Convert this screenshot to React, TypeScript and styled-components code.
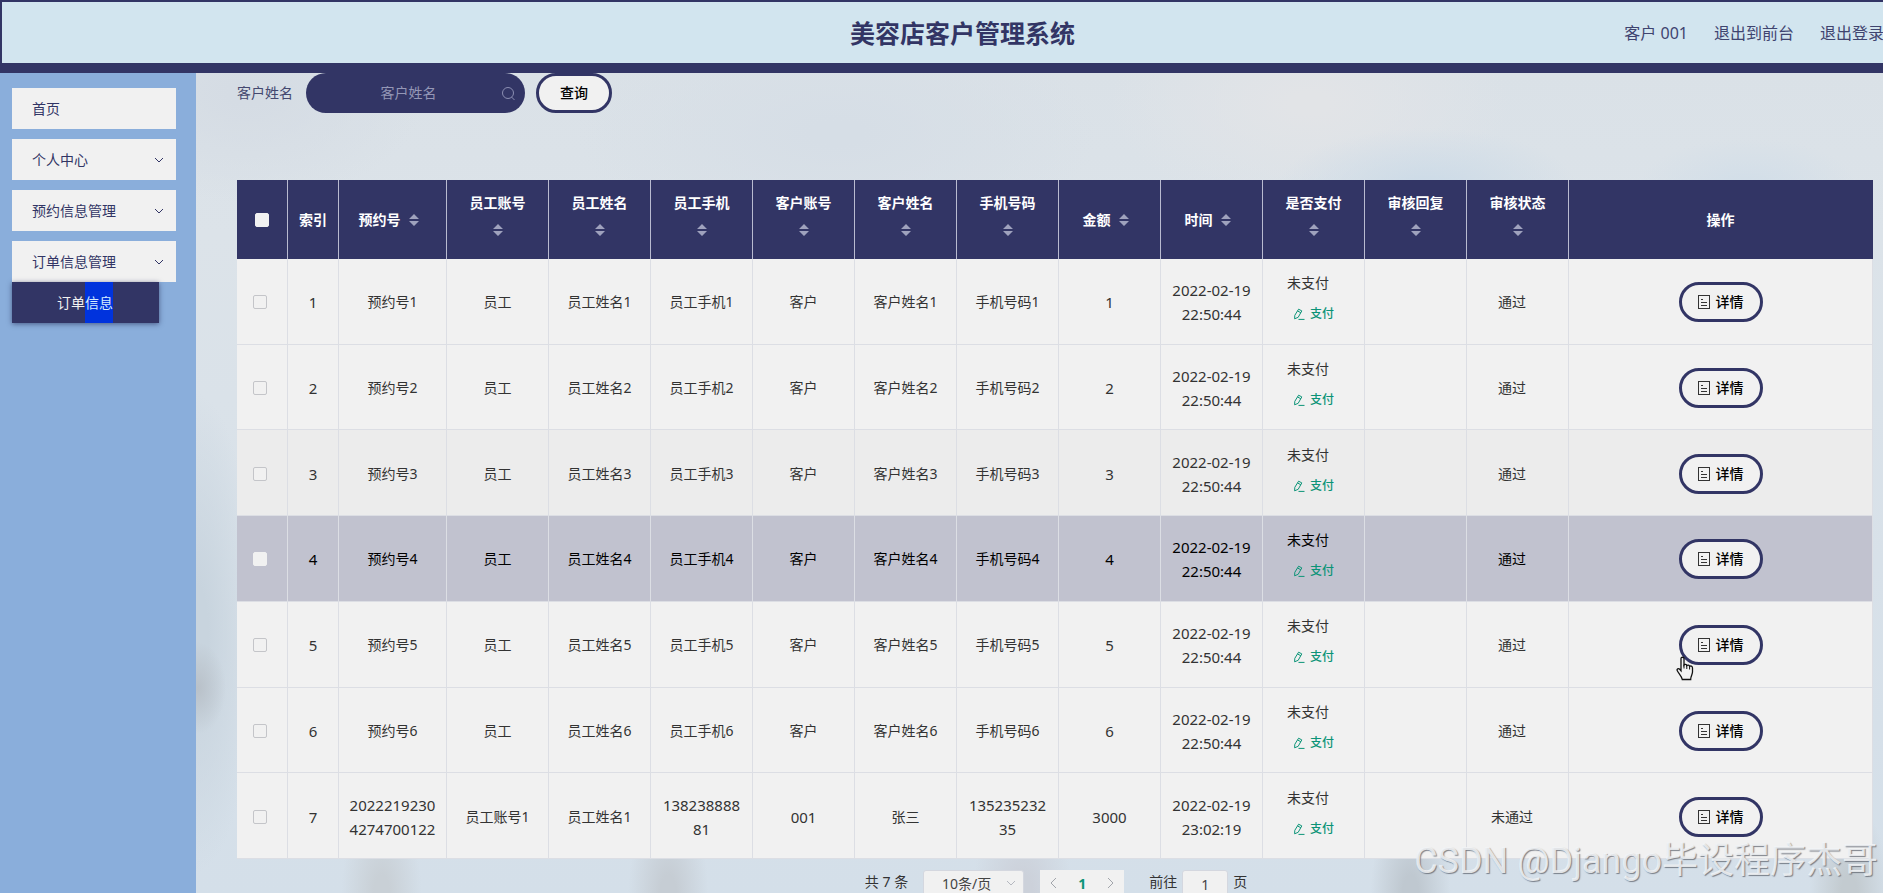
import React from "react";
import styled, { createGlobalStyle } from "styled-components";

const NAVY = "#323565";
const PAPER = "#f1f1f1";
const LINE = "#dcdee4";

const GlobalStyle = createGlobalStyle`
  *, *::before, *::after { box-sizing: border-box; }
  body {
    margin: 0;
    color: #333;
    font-family: "Noto Sans", "Noto Sans CJK SC", sans-serif;
    font-size: 14px;
    line-height: 24px;
  }
  button, input, select { font: inherit; }
  button { cursor: pointer; }
`;

const Shell = styled.div`
  position: relative;
  height: 100vh;
  overflow: hidden;
  display: flex;
  flex-direction: column;
`;

const Header = styled.header`
  flex: none;
  display: grid;
  grid-template-columns: 1fr auto 1fr;
  align-items: center;
  height: 73px;
  padding-left: 40px;
  background: #d2e5ef;
  border: solid ${NAVY};
  border-width: 2px 0 10px 2px;
  overflow: hidden;
`;

const Title = styled.h1`
  grid-column: 2;
  margin: 0;
  color: ${NAVY};
  font-size: 25px;
  line-height: 32px;
`;

const UserNav = styled.nav`
  display: flex;
  justify-content: flex-end;
  gap: 26px;
  margin-right: -1px;
  color: #3f446f;
  font-size: 16px;
  white-space: nowrap;
`;

const NavLink = styled.a`
  color: inherit;
  text-decoration: none;
`;

const Body = styled.div`
  flex: 1;
  display: flex;
  min-height: 0;
`;

const Sidebar = styled.aside`
  flex: none;
  width: 196px;
  padding: 15px 20px 0 12px;
  background: #8aaedb;
`;

const Menu = styled.ul`
  display: flex;
  flex-direction: column;
  gap: 10px;
  margin: 0;
  padding: 0;
  list-style: none;
`;

const MenuLink = styled.a`
  display: flex;
  align-items: center;
  justify-content: space-between;
  height: 41px;
  padding: 0 11px 0 20px;
  background: ${PAPER};
  color: ${NAVY};
  text-decoration: none;
`;

const SubLink = styled.a`
  display: block;
  width: 147px;
  padding-left: 45px;
  background: ${NAVY};
  box-shadow: 0 1px 5px rgba(30, 35, 80, 0.6);
  color: ${PAPER};
  line-height: 41px;
  text-decoration: none;
`;

const Highlight = styled.mark`
  display: inline-block;
  background: #0033dd;
  color: #d5ecff;
`;

const Main = styled.main`
  flex: 1;
  min-width: 0;
  padding: 0 10px 0 41px;
  background:
    radial-gradient(ellipse 28px 46px at 2px 615px, #b9c1c9 0, transparent 100%),
    radial-gradient(ellipse 60px 240px at 0 560px, #c8d4de 20%, transparent 100%),
    radial-gradient(ellipse 150px 60px at 73% 115px, #cddbe7 10%, transparent 100%),
    radial-gradient(ellipse 110px 50px at 92% 115px, #d2dee8 10%, transparent 100%),
    radial-gradient(ellipse 200px 110px at 66% 30px, #e2e4e7 10%, transparent 100%),
    radial-gradient(ellipse 260px 120px at 38% 60px, #d6dee6 10%, transparent 100%),
    radial-gradient(ellipse 180px 110px at 3% 20px, #d5dce4 10%, transparent 100%),
    radial-gradient(ellipse 40px 90px at 11% 100%, #c9d0d6 20%, transparent 100%),
    radial-gradient(ellipse 40px 90px at 28% 100%, #c6cdd4 20%, transparent 100%),
    radial-gradient(ellipse 50px 90px at 49% 100%, #ccd1da 20%, transparent 100%),
    radial-gradient(ellipse 40px 90px at 72% 100%, #bfc8d0 20%, transparent 100%),
    radial-gradient(ellipse 40px 90px at 98% 100%, #c3cbd0 20%, transparent 100%),
    linear-gradient(180deg, #dae1e7 0, #dce3e9 160px, #d4dfe9 100%);
`;

const SearchBar = styled.form`
  display: flex;
  align-items: center;
  height: 107px;
  padding-bottom: 67px;
  color: #44486f;
`;

const SearchField = styled.div`
  display: flex;
  align-items: center;
  width: 219px;
  height: 40px;
  margin: 0 11px 0 13px;
  padding: 0 9px 0 10px;
  border-radius: 20px;
  background: ${NAVY};
  color: #8b8eb2;
`;

const SearchInput = styled.input`
  flex: 1;
  min-width: 0;
  padding: 0;
  border: 0;
  outline: 0;
  background: none;
  color: ${PAPER};
  text-align: center;
  &::placeholder { color: #9497b6; opacity: 1; }
`;

const PillButton = styled.button<{ $width: number }>`
  display: inline-flex;
  align-items: center;
  justify-content: center;
  gap: 6px;
  width: ${(p) => p.$width}px;
  height: 40px;
  padding: 0;
  border: 3px solid ${NAVY};
  border-radius: 20px;
  background: ${PAPER};
  color: #000;
  font-weight: 500;
`;

const Table = styled.table`
  width: 100%;
  height: 679px;
  table-layout: fixed;
  border-collapse: separate;
  border-spacing: 0;
`;

const HeadCell = styled.th`
  height: 79px;
  padding: 0;
  border-right: 1px solid #b9bbd0;
  background: ${NAVY};
  color: #fff;
  &:last-child { border-right-color: ${NAVY}; }
`;

const HeadLabel = styled.div<{ $stacked?: boolean }>`
  display: flex;
  flex-direction: ${(p) => (p.$stacked ? "column" : "row")};
  align-items: center;
  justify-content: center;
  gap: ${(p) => (p.$stacked ? 1 : 0)}px;
  padding-bottom: ${(p) => (p.$stacked ? 7 : 0)}px;
  line-height: 27px;
`;

const SortButton = styled.button`
  display: flex;
  align-items: center;
  justify-content: center;
  width: 26px;
  height: 27px;
  padding: 0;
  border: 0;
  background: none;
  color: #9fa2bd;
`;

const Row = styled.tr<{ $tone: string; $active?: boolean }>`
  background: ${(p) => p.$tone};
  color: ${(p) => (p.$active ? "#000" : "#333")};
`;

const Cell = styled.td<{ $numeric?: boolean }>`
  height: 85px;
  padding: 2px 10px 0;
  border: solid ${LINE};
  border-width: 0 1px 1px 0;
  font-size: ${(p) => (p.$numeric ? 15 : 14)}px;
  text-align: center;
  vertical-align: middle;
  word-break: break-all;
`;

const PayCell = styled(Cell)`
  padding-bottom: 7px;
`;

const Check = styled.input<{ $bare?: boolean }>`
  appearance: none;
  display: block;
  width: 14px;
  height: 14px;
  margin: 0 auto;
  border: 1px solid ${(p) => (p.$bare ? PAPER : "#c4c5c9")};
  border-radius: 2px;
  background: ${PAPER};
`;

const CheckSlot = styled.div`
  padding-right: 4px;
`;

const StatusText = styled.span`
  display: block;
  padding-right: 11px;
`;

const PayButton = styled.button`
  display: flex;
  align-items: center;
  gap: 5px;
  margin: 7px auto 0;
  padding: 0;
  border: 0;
  background: none;
  color: #0b9477;
  font-size: 12px;
  font-weight: 500;
`;

const ActionSlot = styled.div`
  position: relative;
  display: inline-flex;
  vertical-align: middle;
`;

const Pointer = styled.svg`
  position: absolute;
  left: -3px;
  top: 31px;
`;

const Pagination = styled.nav`
  display: flex;
  align-items: flex-start;
  justify-content: center;
  padding: 11px 0 0 2px;
`;

const PageText = styled.span`
  white-space: pre;
`;

const PageLabel = styled.label`
  display: flex;
  gap: 5px;
`;

const SizePicker = styled.div`
  position: relative;
  width: 101px;
  margin: 0 16px 0 15px;
`;

const SizeSelect = styled.select`
  appearance: none;
  width: 100%;
  height: 28px;
  padding: 0 14px 0 0;
  border: 1px solid #d4d7df;
  border-radius: 3px;
  background: ${PAPER};
  color: #444;
  text-align: center;
  text-align-last: center;
`;

const SizeArrow = styled.span`
  position: absolute;
  right: 7px;
  top: 2px;
  color: #b5b8c0;
  pointer-events: none;
`;

const Pager = styled.div`
  display: flex;
  width: 84px;
  margin-right: 25px;
  background: ${PAPER};
`;

const PagerButton = styled.button<{ $current?: boolean }>`
  flex: 1;
  height: 28px;
  padding: 0;
  border: 0;
  background: none;
  color: ${(p) => (p.$current ? "#0b9477" : "#a2a5ab")};
  font-weight: ${(p) => (p.$current ? 700 : 400)};
`;

const JumpInput = styled.input`
  width: 46px;
  height: 28px;
  padding: 0;
  border: 1px solid #d4d7df;
  border-radius: 3px;
  background: ${PAPER};
  color: #444;
  text-align: center;
`;

const Watermark = styled.div`
  position: absolute;
  right: 5px;
  bottom: 8px;
  color: rgba(244, 246, 248, 0.85);
  font-family: Roboto, "Noto Sans CJK SC", sans-serif;
  font-size: 36px;
  font-weight: 400;
  line-height: 48px;
  text-shadow: 1px 1px 1px rgba(90, 95, 105, 0.75);
  white-space: nowrap;
  pointer-events: none;
`;

const Chevron = ({ dir = "down" }: { dir?: "down" | "left" | "right" }) => {
  const d = { down: "M2 4l4 4 4-4", left: "M8 1L3 6l5 5", right: "M4 1l5 5-5 5" }[dir];
  return (
    <svg width="12" height="12" viewBox="0 0 12 12" fill="none" stroke="currentColor" aria-hidden="true">
      <path d={d} />
    </svg>
  );
};

const SearchIcon = () => (
  <svg width="15" height="15" viewBox="0 0 15 15" fill="none" stroke="currentColor" aria-hidden="true">
    <circle cx="7" cy="7" r="5.5" />
    <path d="M10.5 11l3 3" />
  </svg>
);

const SortIcon = () => (
  <svg width="10" height="12" viewBox="0 0 10 12" fill="currentColor" aria-hidden="true">
    <path d="M5 0l5 5H0zM5 12L0 7h10z" />
  </svg>
);

const DocIcon = () => (
  <svg width="12" height="14" viewBox="0 0 12 14" fill="none" stroke="#333" aria-hidden="true">
    <rect x="0.5" y="0.5" width="11" height="13" />
    <path d="M3 4.5h2M3 7.5h6M3 10.5h6" />
  </svg>
);

const PenIcon = () => (
  <svg width="12" height="12" viewBox="0 0 12 12" fill="none" stroke="currentColor" aria-hidden="true">
    <path d="M5.600 1.200L8.800 2.900 5.200 9.300 1.600 10.800 1.800 7.300zM4.600 3L7.800 4.700M5.500 11.400H11.500" />
  </svg>
);

const HandPointer = () => (
  <Pointer width="19" height="25" viewBox="0 0 19 25" aria-hidden="true">
    <path
      d="M5 2.5C5 .8 8 .8 8 2.5V9c.6-1 2.6-.8 2.8.6.8-.9 2.5-.6 2.8.7.9-.7 2.9-.2 2.9 1.6v4.2c0 2.4-1.8 3.6-1.8 7.4H6.3C6 20.500 2.700 17.500 1.300 14.800.4 13 2.500 12 3.700 13.300L5 14.800z"
      fill="#f4f4f4"
      stroke="#111"
      strokeWidth="1.3"
    />
    <path d="M8 8.500v4M10.800 9.500v3.500M13.600 10.500v3" stroke="#111" fill="none" />
  </Pointer>
);

const columns: { label: string; sort: boolean }[] = [
  { label: "索引", sort: false },
  { label: "预约号", sort: true },
  { label: "员工账号", sort: true },
  { label: "员工姓名", sort: true },
  { label: "员工手机", sort: true },
  { label: "客户账号", sort: true },
  { label: "客户姓名", sort: true },
  { label: "手机号码", sort: true },
  { label: "金额", sort: true },
  { label: "时间", sort: true },
  { label: "是否支付", sort: true },
  { label: "审核回复", sort: true },
  { label: "审核状态", sort: true },
  { label: "操作", sort: false },
];

const widths = [51, 51, 108, 102, 102, 102, 102, 102, 102, 102, 102, 102, 102, 102];

const rows = [
  ...[1, 2, 3, 4, 5, 6].map((n) => ({
    cells: [
      `${n}`, `预约号${n}`, "员工", `员工姓名${n}`, `员工手机${n}`, "客户",
      `客户姓名${n}`, `手机号码${n}`, `${n}`, "2022-02-19 22:50:44",
    ],
    status: "通过",
  })),
  {
    cells: [
      "7", "20222192304274700122", "员工账号1", "员工姓名1", "13823888881", "001",
      "张三", "13523523235", "3000", "2022-02-19 23:02:19",
    ],
    status: "未通过",
  },
];

const HOVERED = 3;
const tone = (i: number) => (i === HOVERED ? "#c1c2cf" : i === 2 ? "#ececec" : PAPER);

export default function App() {
  return (
    <Shell>
      <GlobalStyle />
      <Header>
        <Title>美容店客户管理系统</Title>
        <UserNav>
          <span>客户 001</span>
          <NavLink href="#front">退出到前台</NavLink>
          <NavLink href="#logout">退出登录</NavLink>
        </UserNav>
      </Header>
      <Body>
        <Sidebar>
          <Menu>
            <li><MenuLink href="#home">首页</MenuLink></li>
            <li><MenuLink href="#profile">个人中心<Chevron /></MenuLink></li>
            <li><MenuLink href="#bookings">预约信息管理<Chevron /></MenuLink></li>
            <li>
              <MenuLink href="#orders">订单信息管理<Chevron /></MenuLink>
              <SubLink href="#order-list">订单<Highlight>信息</Highlight></SubLink>
            </li>
          </Menu>
        </Sidebar>
        <Main>
          <SearchBar onSubmit={(e) => e.preventDefault()}>
            <label htmlFor="customer">客户姓名</label>
            <SearchField>
              <SearchInput id="customer" placeholder="客户姓名" />
              <SearchIcon />
            </SearchField>
            <PillButton $width={76} type="submit">查询</PillButton>
          </SearchBar>
          <Table>
            <colgroup>
              {widths.map((w, i) => <col key={i} width={w} />)}
              <col />
            </colgroup>
            <thead>
              <tr>
                <HeadCell><Check $bare type="checkbox" aria-label="全选" /></HeadCell>
                {columns.map((c) => (
                  <HeadCell key={c.label}>
                    <HeadLabel $stacked={c.sort && c.label.length > 3}>
                      {c.label}
                      {c.sort && <SortButton aria-label={`${c.label}排序`}><SortIcon /></SortButton>}
                    </HeadLabel>
                  </HeadCell>
                ))}
              </tr>
            </thead>
            <tbody>
              {rows.map((r, i) => (
                <Row key={i} $tone={tone(i)} $active={i === HOVERED}>
                  <Cell>
                    <CheckSlot><Check $bare={i === HOVERED} type="checkbox" aria-label={`选择${i + 1}`} /></CheckSlot>
                  </Cell>
                  {r.cells.map((text, j) => (
                    <Cell key={j} $numeric={/^[\d:\- ]+$/.test(text)}>{text}</Cell>
                  ))}
                  <PayCell>
                    <StatusText>未支付</StatusText>
                    <PayButton><PenIcon />支付</PayButton>
                  </PayCell>
                  <Cell />
                  <Cell><StatusText>{r.status}</StatusText></Cell>
                  <Cell>
                    <ActionSlot>
                      <PillButton $width={84}><DocIcon />详情</PillButton>
                      {i === 4 && <HandPointer />}
                    </ActionSlot>
                  </Cell>
                </Row>
              ))}
            </tbody>
          </Table>
          <Pagination>
            <PageText>共 7 条</PageText>
            <SizePicker>
              <SizeSelect aria-label="每页条数"><option>10条/页</option></SizeSelect>
              <SizeArrow><Chevron /></SizeArrow>
            </SizePicker>
            <Pager>
              <PagerButton aria-label="上一页"><Chevron dir="left" /></PagerButton>
              <PagerButton $current>1</PagerButton>
              <PagerButton aria-label="下一页"><Chevron dir="right" /></PagerButton>
            </Pager>
            <PageLabel>
              前往
              <JumpInput defaultValue="1" />
              页
            </PageLabel>
          </Pagination>
        </Main>
      </Body>
      <Watermark>CSDN @Django毕设程序杰哥</Watermark>
    </Shell>
  );
}
